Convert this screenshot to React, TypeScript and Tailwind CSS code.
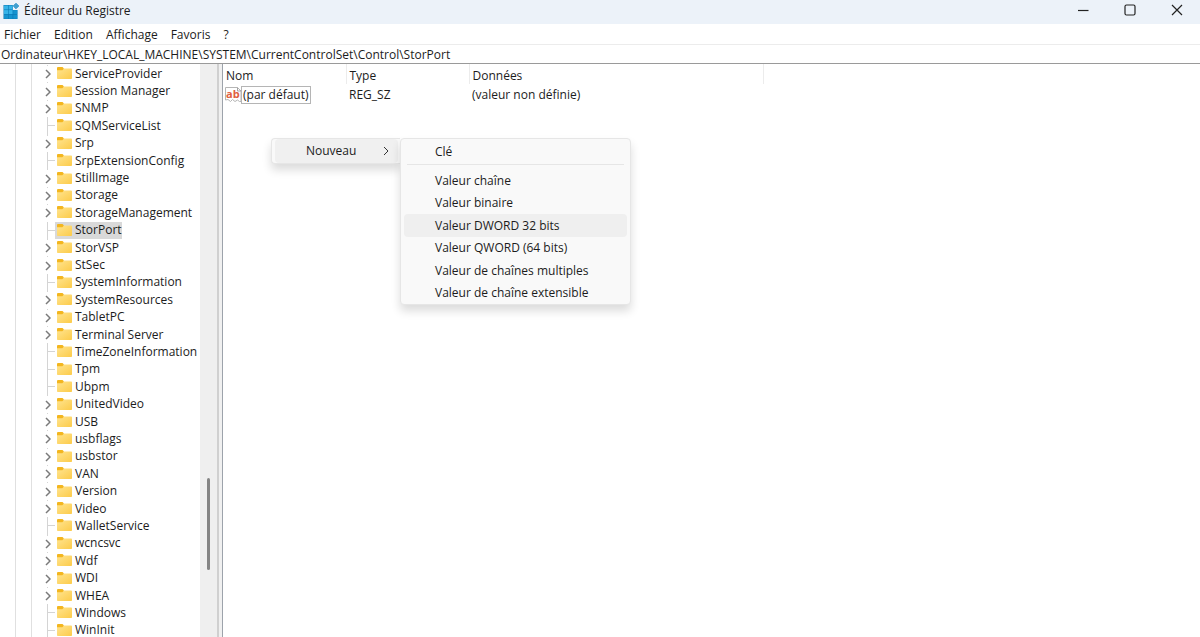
import type { ReactNode } from 'react';

interface TreeKey {
  name: string;
  leaf?: boolean;
  selected?: boolean;
}

const keys: TreeKey[] = [
  { name: 'ServiceProvider' },
  { name: 'Session Manager' },
  { name: 'SNMP' },
  { name: 'SQMServiceList', leaf: true },
  { name: 'Srp' },
  { name: 'SrpExtensionConfig', leaf: true },
  { name: 'StillImage' },
  { name: 'Storage' },
  { name: 'StorageManagement' },
  { name: 'StorPort', leaf: true, selected: true },
  { name: 'StorVSP' },
  { name: 'StSec' },
  { name: 'SystemInformation', leaf: true },
  { name: 'SystemResources' },
  { name: 'TabletPC' },
  { name: 'Terminal Server' },
  { name: 'TimeZoneInformation', leaf: true },
  { name: 'Tpm', leaf: true },
  { name: 'Ubpm', leaf: true },
  { name: 'UnitedVideo' },
  { name: 'USB' },
  { name: 'usbflags' },
  { name: 'usbstor' },
  { name: 'VAN' },
  { name: 'Version' },
  { name: 'Video' },
  { name: 'WalletService', leaf: true },
  { name: 'wcncsvc' },
  { name: 'Wdf' },
  { name: 'WDI' },
  { name: 'WHEA' },
  { name: 'Windows', leaf: true },
  { name: 'WinInit', leaf: true },
];

const valueTypes = [
  'Valeur chaîne',
  'Valeur binaire',
  'Valeur DWORD 32 bits',
  'Valeur QWORD (64 bits)',
  'Valeur de chaînes multiples',
  'Valeur de chaîne extensible',
];

const menus = ['Fichier', 'Edition', 'Affichage', 'Favoris', '?'];

function RegistryIcon() {
  return (
    <svg viewBox="0 0 17 18" className="h-[18px] w-[17px] shrink-0" aria-hidden="true">
      <path d="M0.5 3H9.8V8H14.5V17H0.5Z" fill="#0b78b4" />
      <g fill="#35b3e8">
        <rect x="1" y="3.5" width="4" height="4" />
        <rect x="5.6" y="3.5" width="4" height="4" />
        <rect x="1" y="8.1" width="4" height="4" />
        <rect x="5.6" y="8.1" width="4" height="4" />
      </g>
      <g fill="#1593cf">
        <rect x="10.2" y="8.1" width="4" height="4" />
        <rect x="1" y="12.7" width="4" height="4" />
        <rect x="5.6" y="12.7" width="4" height="4" />
        <rect x="10.2" y="12.7" width="4" height="4" />
      </g>
      <path d="M13 1.2 15.8 4 13 6.8 10.2 4Z" fill="#3f9fd0" stroke="#3f9fd0" strokeLinejoin="round" />
    </svg>
  );
}

function FolderIcon() {
  return (
    <svg viewBox="0 0 15 13" className="h-[13px] w-[15px] shrink-0" aria-hidden="true">
      <defs>
        <linearGradient id="folder" x1="0" y1="0" x2="1" y2="1">
          <stop offset="0" stopColor="#ffe48f" />
          <stop offset="1" stopColor="#fccb4a" />
        </linearGradient>
      </defs>
      <path d="M0 1Q0 0 1 0H5.5L7 1.6V4.5H0Z" fill="#f3b61f" />
      <path d="M0 3.2H5.4L7 1.6H14.2Q15 1.6 15 2.4V11.2Q15 12 14.2 12H0.8Q0 12 0 11.2Z" fill="url(#folder)" />
    </svg>
  );
}

function StringIcon() {
  return (
    <svg viewBox="0 0 17 17" className="h-[17px] w-[17px] shrink-0" aria-hidden="true">
      <path d="M0.5 1.5H12.5L16 5V15.5H14.5L12.5 14 10 15.5 7.5 13.5 5.5 15.5 3 13.5 0.5 14Z" fill="#fff" stroke="#b5b5b5" />
      <path d="M12.5 1.5V5H16" fill="none" stroke="#a5a5a5" />
      <text x="1" y="11.5" fontSize="11" fontWeight="700" fill="#e0603f" fontFamily="Open Sans, sans-serif">
        ab
      </text>
    </svg>
  );
}

function Chevron({ className }: { className: string }) {
  return (
    <svg viewBox="0 0 6 10" className={className} fill="none" stroke="currentColor" aria-hidden="true">
      <path d="M1 1 5 5 1 9" />
    </svg>
  );
}

function WindowButton({ label, children }: { label: string; children: ReactNode }) {
  return (
    <button aria-label={label} className="flex w-[47px] items-center justify-center pb-[5px] hover:bg-black/5">
      <svg viewBox="0 0 12 12" className="size-3" fill="none" stroke="#222" strokeWidth="1.2">
        {children}
      </svg>
    </button>
  );
}

function TreeRow({ item }: { item: TreeKey }) {
  return (
    <li role="treeitem" aria-selected={!!item.selected} className="flex min-h-[17px] items-center">
      {item.leaf ? (
        <span className="flex w-2 items-center self-stretch border-l border-[#d4d4d4]">
          <span className="h-px w-full bg-[#d4d4d4]" />
        </span>
      ) : (
        <span className="flex w-2 flex-col self-stretch">
          <span className="h-px w-px bg-[#d4d4d4]" />
          <span className="flex flex-1 items-center">
            <Chevron className="-ml-0.5 h-[10px] w-[6px] stroke-[1.5] text-[#7a7a7a]" />
          </span>
        </span>
      )}
      <span
        className={
          item.selected
            ? 'flex h-[17px] items-center gap-[3px] bg-[#d9d9d9] pl-0.5'
            : 'flex h-[17px] items-center gap-[3px] pl-0.5'
        }
      >
        <FolderIcon />
        {item.name}
      </span>
    </li>
  );
}

function ContextMenu() {
  return (
    <div className="absolute top-[74px] left-[48px] flex items-start">
      <div role="menu" className="w-[129px] rounded-l border border-r-0 border-[#e6e6e6] bg-[#f9f9f9] pr-0.5 pl-[3px] shadow-[0_6px_10px_rgba(0,0,0,0.14)]">
        <button role="menuitem" className="flex h-6 w-full items-center justify-between rounded-sm bg-[#f0f0f0] pr-[9px] pl-[31px]">
          Nouveau
          <Chevron className="h-[10px] w-[6px] text-[#333]" />
        </button>
      </div>
      <div role="menu" className="w-[231px] rounded border border-[#e6e6e6] bg-[#f9f9f9] px-[3px] shadow-[0_6px_10px_rgba(0,0,0,0.14)]">
        <button role="menuitem" className="flex h-[25px] w-full items-center pl-[31px]">
          Clé
        </button>
        <hr className="mx-[3px] mb-[4px] border-[#e6e6e6]" />
        <div className="grid h-[135px] auto-rows-fr">
          {valueTypes.map((type) => (
            <button
              key={type}
              role="menuitem"
              className={
                type === 'Valeur DWORD 32 bits'
                  ? 'flex items-center rounded-sm bg-[#efefef] pt-px pl-[31px]'
                  : 'flex items-center rounded-sm pt-px pl-[31px]'
              }
            >
              {type}
            </button>
          ))}
        </div>
      </div>
    </div>
  );
}

export default function App() {
  return (
    <div className="flex h-screen flex-col overflow-hidden bg-white font-['Open_Sans',sans-serif] text-[12px] leading-4 text-[#1c1c1c]">
      <header className="flex h-6 shrink-0 items-stretch justify-between bg-[#ecf2f9]">
        <h1 className="flex items-center gap-1 pb-[3px] pl-[3px]">
          <RegistryIcon />
          Éditeur du Registre
        </h1>
        <div className="flex">
          <WindowButton label="Réduire">
            <path d="M1 6.5H11.5" />
          </WindowButton>
          <WindowButton label="Agrandir">
            <rect x="1" y="1" width="10" height="10" rx="1.5" />
          </WindowButton>
          <WindowButton label="Fermer">
            <path d="M1 1 11 11M11 1 1 11" />
          </WindowButton>
        </div>
      </header>

      <nav className="flex h-[21px] shrink-0 items-center gap-[13px] border-b border-[#ececec] px-1 pt-0.5">
        {menus.map((menu) => (
          <button key={menu}>{menu}</button>
        ))}
      </nav>

      <input
        aria-label="Adresse"
        className="h-[19px] w-full shrink-0 border-b border-[#9a9a9a] pl-px outline-none"
        defaultValue="Ordinateur\HKEY_LOCAL_MACHINE\SYSTEM\CurrentControlSet\Control\StorPort"
      />

      <main className="flex min-h-0 flex-1">
        <aside className="flex w-[217px] shrink-0">
          <div className="ml-[15px] w-4 shrink-0 border-l border-[#e0e0e0]" />
          <ul role="tree" aria-label="Clés" className="-mb-0.5 grid flex-1 auto-rows-fr border-l border-[#e0e0e0] pt-px pl-[15px]">
            {keys.map((item) => (
              <TreeRow key={item.name} item={item} />
            ))}
          </ul>
          <div className="w-[17px] shrink-0 bg-[#efefef] pt-[414px] pl-[7px]">
            <div className="h-[92px] w-[3px] rounded-full bg-[#858585]" />
          </div>
        </aside>
        <div className="w-[6px] shrink-0 border-r border-l-2 border-r-[#9da3ab] border-l-[#d0d0d0] bg-[#f0f0f0]" />

        <section className="relative min-w-0 flex-1">
          <table className="table-fixed border-collapse text-left">
            <thead>
              <tr className="h-5">
                <th className="w-[123px] border-r border-[#ececec] pt-1 pl-[3px] font-normal">Nom</th>
                <th className="w-[123px] border-r border-[#ececec] pt-1 pl-[3px] font-normal">Type</th>
                <th className="w-[294px] border-r border-[#ececec] pt-1 pl-[3px] font-normal">Données</th>
              </tr>
            </thead>
            <tbody>
              <tr className="h-[21px]">
                <td className="pl-0.5">
                  <span className="flex items-center">
                    <StringIcon />
                    <span className="-ml-px flex h-[18px] items-center border border-[#b5b5b5] bg-white px-px">
                      (par défaut)
                    </span>
                  </span>
                </td>
                <td className="pl-[3px]">REG_SZ</td>
                <td className="pl-[3px]">(valeur non définie)</td>
              </tr>
            </tbody>
          </table>
          <ContextMenu />
        </section>
      </main>
    </div>
  );
}
